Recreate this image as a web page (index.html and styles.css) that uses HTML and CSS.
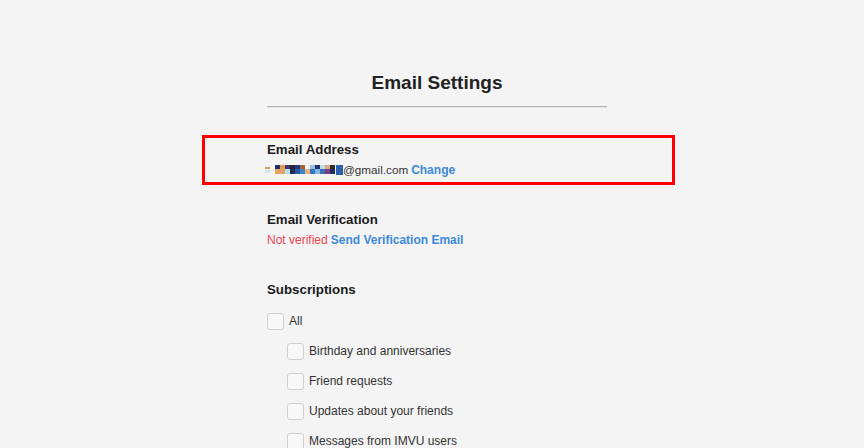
FILE: index.html
```html
<!DOCTYPE html>
<html lang="en">
<head>
  <meta charset="UTF-8" />
  <meta name="viewport" content="width=device-width, initial-scale=1.0"/>
  <title>Email Settings</title>
  <link rel="stylesheet" href="styles.css">
</head>
<body>

  <div id="main">
    <h1>Email Settings</h1>
    <hr class="divider">

    <!-- Email address -->
    <div class="section">
      <div class="highlight"></div>
      <h2>Email Address</h2>
      <div class="value">
        <svg class="mosaic" width="78" height="10" viewBox="0 0 78 10">
          <rect x="0" y="2" width="5" height="2" fill="#dba15c"/>
          <rect x="0" y="5" width="5" height="3" fill="#cbe9f1"/>
          <rect x="10" y="0" width="5" height="4" fill="#23306f"/>
          <rect x="10" y="4" width="5" height="5" fill="#e2a462"/>
          <rect x="15" y="0" width="5" height="4" fill="#e29c4f"/>
          <rect x="15" y="4" width="5" height="5" fill="#dda467"/>
          <rect x="20" y="0" width="5" height="4" fill="#4a2e78"/>
          <rect x="20" y="4" width="5" height="5" fill="#b6e0ee"/>
          <rect x="25" y="0" width="5" height="4" fill="#27253a"/>
          <rect x="25" y="4" width="5" height="5" fill="#1d2c59"/>
          <rect x="30" y="0" width="5" height="4" fill="#223a86"/>
          <rect x="30" y="4" width="5" height="5" fill="#2c58a2"/>
          <rect x="35" y="0" width="5" height="4" fill="#a8622c"/>
          <rect x="35" y="4" width="5" height="5" fill="#3f83c8"/>
          <rect x="40" y="0" width="5" height="4" fill="#f1f1f1"/>
          <rect x="40" y="4" width="5" height="5" fill="#e6b27c"/>
          <rect x="45" y="0" width="5" height="4" fill="#8fc3e4"/>
          <rect x="45" y="4" width="5" height="5" fill="#3575bd"/>
          <rect x="50" y="0" width="5" height="4" fill="#24336c"/>
          <rect x="50" y="4" width="5" height="5" fill="#7fb6e0"/>
          <rect x="55" y="0" width="5" height="4" fill="#c3dcef"/>
          <rect x="55" y="4" width="5" height="5" fill="#3d6fb8"/>
          <rect x="60" y="0" width="5" height="4" fill="#dfae78"/>
          <rect x="60" y="4" width="5" height="5" fill="#7a3d85"/>
          <rect x="65" y="0" width="5" height="4" fill="#2a2a36"/>
          <rect x="65" y="4" width="5" height="5" fill="#1e2d62"/>
          <rect x="71" y="-2" width="7" height="12" fill="#2c63b1"/>
        </svg><span class="addr">@gmail.com</span>
        <a href="#" class="link">Change</a>
      </div>
    </div>

    <!-- Email verification -->
    <div class="section">
      <h2>Email Verification</h2>
      <div class="value">
        <span class="warn">Not verified</span>
        <a href="#" class="link">Send Verification Email</a>
      </div>
    </div>

    <!-- Subscriptions -->
    <div class="section">
      <h2>Subscriptions</h2>
      <ul class="subs">
        <li><label><input type="checkbox"> All</label>
          <ul class="subs nested">
            <li><label><input type="checkbox"> Birthday and anniversaries</label></li>
            <li><label><input type="checkbox"> Friend requests</label></li>
            <li><label><input type="checkbox"> Updates about your friends</label></li>
            <li><label><input type="checkbox"> Messages from IMVU users</label></li>
          </ul>
        </li>
      </ul>
    </div>
  </div>

</body>
</html>
```

FILE: styles.css
```css
body {
  margin: 0;
  padding-left: 10px;
  font-family: 'Liberation Sans', Arial, sans-serif;
  background: #f4f4f4;
  color: #333;
  overflow: hidden;
}

#main {
  width: 340px;
  margin: 0 auto;
  padding-top: 71px;
}

h1 {
  margin: 0;
  font-size: 19px;
  line-height: 24px;
  text-align: center;
  color: #222;
}

.divider {
  margin: 11px 0 0;
  border: none;
  border-top: 1px solid #b4b4b4;
  border-bottom: 1px solid #e2e2e2;
}

.section {
  position: relative;
  margin-top: 30px;
}

.divider + .section {
  margin-top: 32px;
}

.highlight {
  position: absolute;
  top: -5px;
  bottom: -5px;
  left: -65px;
  right: -68px;
  border: 3px solid #ff0000;
}

h2 {
  margin: 0;
  font-size: 13.3px;
  line-height: 20px;
  color: #1b1b1b;
}

.value {
  font-size: 12px;
  line-height: 20px;
  display: flex;
  align-items: center;
  gap: 3px;
}

.addr {
  font-size: 11.7px;
}

.mosaic {
  margin-left: -2px;
  margin-right: -3px;
  display: block;
}

.link {
  color: #3c8ad8;
  font-weight: bold;
  text-decoration: none;
}

.warn {
  color: #f04452;
}

.subs {
  list-style: none;
  margin: 6px 0 0;
  padding: 0;
}

.subs.nested {
  margin: 0;
  padding-left: 20px;
}

.subs label {
  display: flex;
  align-items: center;
  gap: 5px;
  height: 30px;
  font-size: 12px;
  color: #333;
}

.subs input {
  appearance: none;
  -webkit-appearance: none;
  margin: 0;
  width: 17px;
  height: 17px;
  border: 1px solid #d0d0d0;
  border-radius: 3px;
  background: #f8f8f8;
}
```
